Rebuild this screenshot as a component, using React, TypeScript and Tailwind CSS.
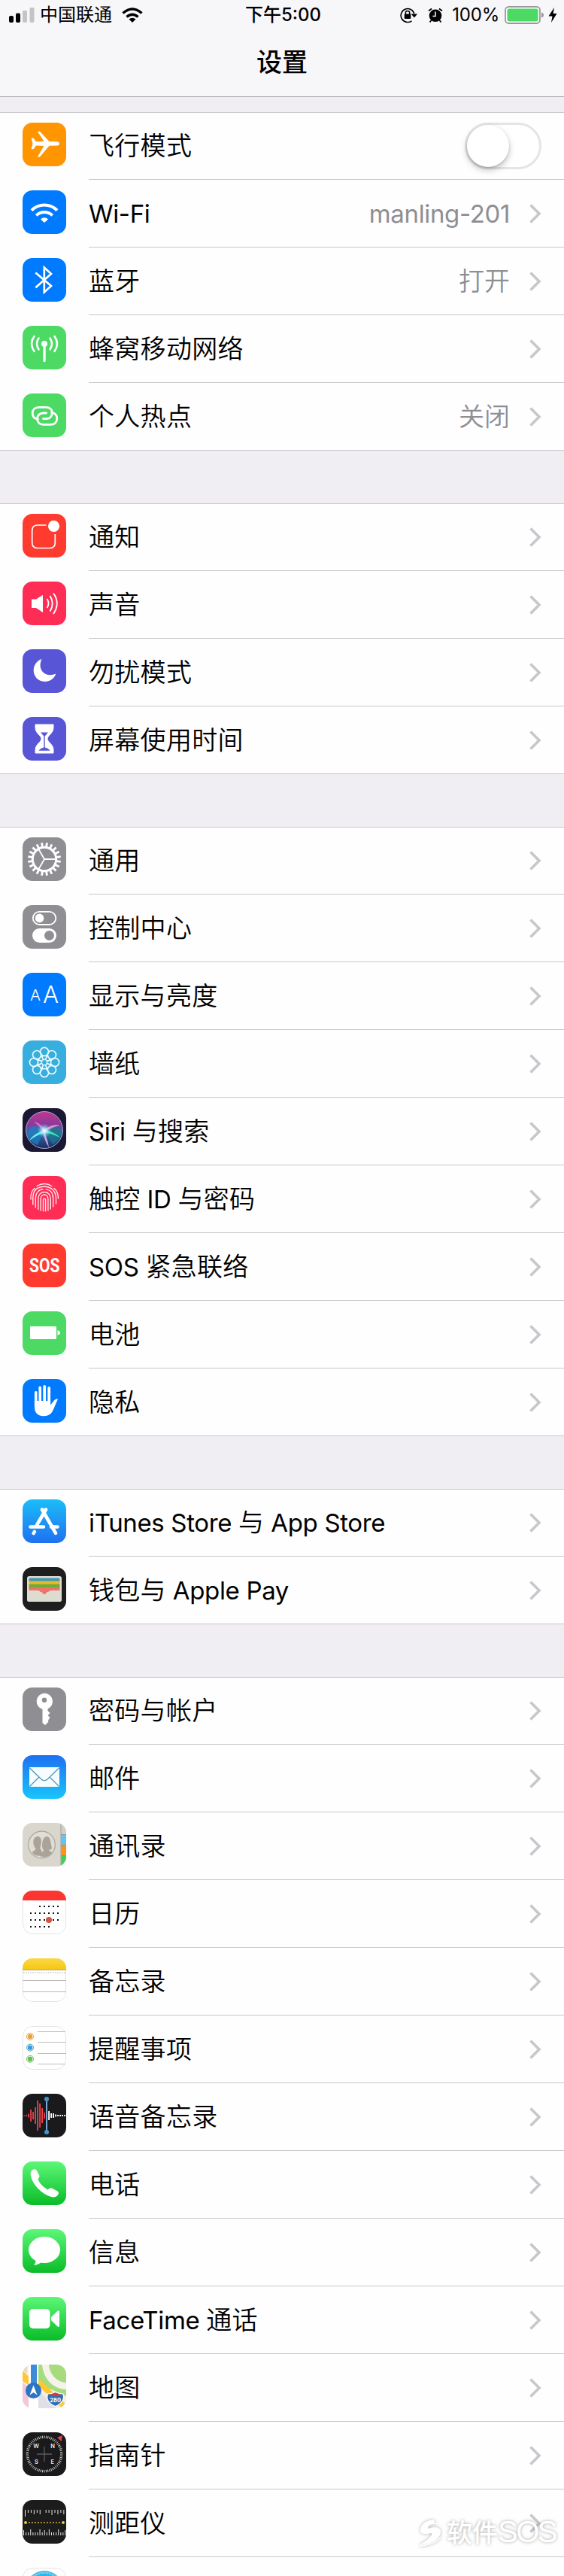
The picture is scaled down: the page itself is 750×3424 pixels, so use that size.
import type { ReactNode } from "react";

type Item = {
  icon: ReactNode;
  label?: string;
  value?: string;
  toggle?: boolean;
};

function Tile({ bg, children }: { bg: string; children?: ReactNode }) {
  return (
    <svg viewBox="0 0 58 58" className="h-[58px] w-[58px] shrink-0 overflow-hidden rounded-[13px]">
      <rect width="58" height="58" fill={bg} />
      {children}
    </svg>
  );
}

function PaperEdge() {
  return <rect x="0.5" y="0.5" width="57" height="57" rx="12.5" fill="none" stroke="#e3e3e5" />;
}

function WifiGlyph() {
  return (
    <>
      <g fill="none" stroke="#fff" strokeWidth="4">
        <path d="M12 26.6A24 24 0 0 1 46 26.6" />
        <path d="M18.3 33.4A15.5 15.5 0 0 1 39.7 33.4" />
      </g>
      <path d="M24 38.4A7 7 0 0 1 34 38.4L29 43Z" fill="#fff" />
    </>
  );
}

const airplane = (
  <Tile bg="#ff9500">
    <path
      d="M11.5 20.5H14.5L18 25.3L28.5 24.8L20 12L22.8 11.5L35.5 25L46 25.3Q49 25.8 49 27.9Q49 30 46 30.4L35.5 30.8L22.8 45.7L20 45.2L28.5 31L18 30.4L14.5 35.2H11.5L13.5 27.9Z"
      fill="#fff"
    />
  </Tile>
);

const wifi = (
  <Tile bg="#007aff">
    <WifiGlyph />
  </Tile>
);

const bluetooth = (
  <Tile bg="#007aff">
    <path d="M17.3 19.5L38 37L28.8 45.5V12.5L38 21L17.3 39.3" fill="none" stroke="#fff" strokeWidth="2.7" />
  </Tile>
);

const cellular = (
  <Tile bg="#4cd964">
    <circle cx="29" cy="24" r="4" fill="#fff" />
    <g fill="none" stroke="#fff" strokeWidth="2.6" strokeLinecap="round">
      <path d="M29 25V46.5" strokeWidth="3.4" />
      <path d="M21.5 16.5Q16.5 24 21.5 31.5" />
      <path d="M36.5 16.5Q41.5 24 36.5 31.5" />
      <path d="M15.5 14Q8.5 24 15.5 34" />
      <path d="M42.5 14Q49.5 24 42.5 34" />
    </g>
  </Tile>
);

const LINK = "M20.5 34.2C15.5 33.5 13.2 30.3 13.2 26.3C13.2 21.3 16.5 18.3 21.5 18.3H31C36 18.3 39.5 21 39.5 25.8C39.5 30.5 36 33.6 31.5 33.6H27.5";

const hotspot = (
  <Tile bg="#4cd964">
    <g fill="none" stroke="#fff" strokeWidth="2.8" strokeLinecap="round">
      <path d={LINK} />
      <path d={LINK} transform="rotate(180 29.5 29.8)" />
    </g>
  </Tile>
);

const notifications = (
  <Tile bg="#ff3b30">
    <path
      d="M31.5 15H20Q12.7 15 12.7 22.3V38.2Q12.7 45.5 20 45.5H36Q43.3 45.5 43.3 38.2V27"
      fill="none"
      stroke="#fff"
      strokeWidth="1.7"
    />
    <circle cx="41.5" cy="16.3" r="7.6" fill="#fff" />
  </Tile>
);

const sound = (
  <Tile bg="#ff2d55">
    <path d="M12 23.5H18L27 17.8V41L18 35H12Z" fill="#fff" />
    <g fill="none" stroke="#fff" strokeWidth="1.9">
      <path d="M32.5 23Q36.5 29 32.5 35" />
      <path d="M36.5 19Q43 29 36.5 39.5" />
      <path d="M41 15.5Q50.5 29 41 43" />
    </g>
  </Tile>
);

const moon = (
  <Tile bg="#5856d6">
    <path d="M25.5 13C11 18 11.5 38 25 42.3C33 44.5 41.5 41 44.3 32.5C30 38.5 19 27 25.5 13Z" fill="#fff" />
  </Tile>
);

const hourglass = (
  <Tile bg="#5856d6">
    <path
      d="M17 10H41V14C41 22 33 24.5 33 29C33 33.5 41 36 41 44V48H17V44C17 36 25 33.5 25 29C25 24.5 17 22 17 14Z"
      fill="#fff"
      stroke="#fff"
      strokeLinejoin="round"
    />
    <path d="M24 20.5H34L29.7 25.5V40.5C33 41.3 35.5 43 36.5 44.8H21.5C22.5 43 25 41.3 28.3 40.5V25.5Z" fill="#5856d6" />
  </Tile>
);

const gear = (
  <Tile bg="#8e8e93">
    <g fill="none" stroke="#fff">
      <circle cx="29" cy="29" r="15.7" strokeWidth="3" />
      {Array.from({ length: 20 }, (_, i) => (
        <path key={i} d="M29 7V12.5" strokeWidth="2.9" transform={`rotate(${i * 18 + 9} 29 29)`} />
      ))}
      <path d="M29 29H44M29 29L21.5 16M29 29L21.5 42" strokeWidth="1.8" />
    </g>
  </Tile>
);

const controlCenter = (
  <Tile bg="#8e8e93">
    <rect x="13.8" y="8.8" width="30.5" height="17.2" rx="8.6" fill="none" stroke="#fff" strokeWidth="1.8" />
    <circle cx="22.5" cy="17.4" r="5.8" fill="#fff" />
    <rect x="13" y="31" width="32" height="19" rx="9.5" fill="#fff" />
    <circle cx="35.5" cy="40.5" r="6.5" fill="#8e8e93" />
  </Tile>
);

const display = (
  <Tile bg="#007aff">
    <g fill="#fff" fontFamily="Inter, sans-serif">
      <text x="10" y="37.3" fontSize="20.5" textLength="14" lengthAdjust="spacingAndGlyphs">A</text>
      <text x="27" y="39.8" fontSize="31" textLength="21" lengthAdjust="spacingAndGlyphs">A</text>
    </g>
  </Tile>
);

const wallpaper = (
  <Tile bg="#37aede">
    <g fill="none" stroke="#e9fbff" strokeWidth="1.7">
      {Array.from({ length: 8 }, (_, i) => (
        <g key={i} transform={`rotate(${i * 45} 29 29)`}>
          <circle cx="29" cy="15" r="5.6" />
          <path d="M24.5 18.5L27.5 25.5M33.5 18.5L30.5 25.5" strokeWidth="1.4" />
        </g>
      ))}
      <circle cx="29" cy="29" r="3.6" strokeWidth="1.4" />
    </g>
  </Tile>
);

const siri = (
  <Tile bg="#1b1833">
    <defs>
      <linearGradient id="siri-base" x1="0" y1="0" x2="0" y2="1">
        <stop offset="0" stopColor="#c2358f" />
        <stop offset="0.35" stopColor="#8a3a9c" />
        <stop offset="0.6" stopColor="#2a6f9e" />
        <stop offset="1" stopColor="#1d2b66" />
      </linearGradient>
      <radialGradient id="siri-glow">
        <stop offset="0" stopColor="#fff" />
        <stop offset="0.35" stopColor="#bff4ff" stopOpacity="0.8" />
        <stop offset="1" stopColor="#55d8e8" stopOpacity="0" />
      </radialGradient>
    </defs>
    <circle cx="29" cy="29" r="24.5" fill="url(#siri-base)" />
    <path d="M29 29C20 20 9 22 6 34C8 42 14 47 20 49Z" fill="#1f7fc4" opacity="0.7" />
    <path d="M29 29C38 22 48 22 52 30C51 38 46 44 40 48Z" fill="#187a8c" opacity="0.7" />
    <path d="M29 30C22 31 13 36 9 43C17 37 24 34 31 32Z" fill="#6ff0e6" />
    <path d="M29 29C37 30 45 34 50 39C43 36 35 33 28 32Z" fill="#45e0b8" />
    <path d="M30 28C36 23 43 21 50 23C43 24 36 27 31 31Z" fill="#e88fc8" />
    <path d="M29 30C31 37 34 45 35 52C31 46 28 38 27 31Z" fill="#d9a3f0" />
    <path d="M29 28C26 23 21 19 15 18C20 22 25 27 28 31Z" fill="#e46ac4" />
    <circle cx="29" cy="30" r="9.5" fill="url(#siri-glow)" />
    <circle cx="29" cy="29" r="24.5" fill="none" stroke="#a9a9cf" strokeWidth="1" />
  </Tile>
);

const touchId = (
  <Tile bg="#ff2d55">
    <g fill="none" stroke="#ffe9ee" strokeWidth="1.4" strokeLinecap="round">
      <path d="M19 13.5Q29 7.5 39 13.5" />
      <path d="M11 31C10.5 24 12.5 19.5 16 16.5" />
      <path d="M42 16.5C46 20 47.5 25 47.5 30" />
      <path d="M13.8 38V29C14 19 20 14.3 29 14.3C38 14.3 44 20 44.5 29V37" />
      <path d="M17.3 42V30C17.3 22.5 22 17.8 27 17.8" />
      <path d="M31 17.9C37 18.5 40.7 23 40.7 30V41" />
      <path d="M20.8 44.5V30.5C20.8 18.5 37.3 18.5 37.3 30.5V44" />
      <path d="M24.2 46V31C24.2 23 33.9 23 33.9 31V46" />
      <path d="M27.5 46.8V31.5Q29 28.3 30.6 31.5V46.8" />
    </g>
  </Tile>
);

const sos = (
  <Tile bg="#ff3b30">
    <text x="9" y="38.3" fill="#fff" fontFamily="Roboto, sans-serif" fontWeight="700" fontSize="26" textLength="40.5" lengthAdjust="spacingAndGlyphs">
      SOS
    </text>
  </Tile>
);

const battery = (
  <Tile bg="#4cd964">
    <rect x="10" y="20" width="35" height="17" rx="1" fill="#fff" />
    <path d="M46.5 25.2Q50 26 50 28.5Q50 31 46.5 31.8Z" fill="#fff" />
  </Tile>
);

const privacy = (
  <Tile bg="#007aff">
    <g stroke="#fff" strokeWidth="3.8" strokeLinecap="round">
      <path d="M17.8 18V36M23.2 11.5V32M29.2 10V32M35.2 12V32" />
    </g>
    <path d="M15.9 29H37.1V34.5L42 28.5Q44 26 47 26.5Q45 31 42.5 37C39.5 45 36 49.3 28 49.3C19.5 49.3 15.9 44 15.9 37Z" fill="#fff" />
    <path d="M20.5 13V29M26.2 12V29M32.2 12V29" stroke="#007aff" strokeWidth="1.5" />
  </Tile>
);

const appStore = (
  <Tile bg="url(#store-bg)">
    <defs>
      <linearGradient id="store-bg" x1="0" y1="0" x2="0" y2="1">
        <stop offset="0" stopColor="#1cbdf9" />
        <stop offset="1" stopColor="#1f70f1" />
      </linearGradient>
    </defs>
    <g stroke="#fff" strokeWidth="4.6" strokeLinecap="round">
      <path d="M31 13.5L19 34M15.8 43L14.7 45M26 13.5L44 44.8" />
      <path d="M10.5 36.5H28M38 36.5H46.5" />
    </g>
  </Tile>
);

const wallet = (
  <Tile bg="#1e1e1e">
    <rect x="6" y="12" width="46" height="34" rx="3" fill="#dedbd0" />
    <rect x="8.5" y="14.5" width="41" height="5" rx="1.5" fill="#4397b3" />
    <rect x="8.5" y="18.5" width="41" height="5" fill="#e9b92d" />
    <rect x="8.5" y="22.7" width="41" height="5" fill="#72aa38" />
    <rect x="8.5" y="27" width="41" height="6" fill="#ee736b" />
    <path d="M6 31H19C22 31 23 32 25 34Q29 38.5 33 34C35 32 36 31 39 31H52V43Q52 46 49 46H9Q6 46 6 43Z" fill="#dedbd0" />
    <path d="M22 30.5H36C33.500 31 33 32.500 31.500 34.500Q29 37.500 26.500 34.500C25 32.500 24.500 31 22 30.5Z" fill="#ee736b" />
  </Tile>
);

const key = (
  <Tile bg="#8e8e93">
    <path
      fillRule="evenodd"
      d="M29 7.5A11 11 0 0 1 33.5 28.5V31L36.5 34L33.5 37L36.5 40L34 43.5L34.5 45.5L30 50L26.5 47V29A11 11 0 0 1 29 7.5ZM29 13.5A3.2 3.2 0 1 0 29 19.9A3.2 3.2 0 1 0 29 13.5Z"
      fill="#fff"
    />
  </Tile>
);

const mail = (
  <Tile bg="url(#mail-bg)">
    <defs>
      <linearGradient id="mail-bg" x1="0" y1="0" x2="0" y2="1">
        <stop offset="0" stopColor="#1e70f2" />
        <stop offset="1" stopColor="#19c5fb" />
      </linearGradient>
    </defs>
    <rect x="9" y="16" width="40" height="26" rx="1" fill="#f6fcff" />
    <path d="M9.5 17L25 32Q29 35.5 33 32L48.5 17M9.5 41.5L21.5 29.5M48.5 41.5L36.5 29.5" fill="none" stroke="#4a94b5" strokeWidth="1.2" />
  </Tile>
);

const contacts = (
  <Tile bg="#d8d6cd">
    <rect x="51.5" width="7" height="15.5" fill="#cfcfc9" />
    <rect x="51.5" y="15.5" width="7" height="14" fill="#66c3ee" />
    <rect x="51.5" y="29.5" width="7" height="14" fill="#f7931e" />
    <rect x="51.5" y="43.5" width="7" height="15" fill="#43ce52" />
    <path d="M51 0V58M51 15.5H58M51 29.5H58M51 43.5H58" stroke="#8b8f86" strokeWidth="0.8" />
    <circle cx="25.5" cy="29" r="17.8" fill="#dfddd5" stroke="#aaa69b" strokeWidth="1.2" />
    <path d="M13 40C13 37 17.5 36.5 17.5 34.5C12.5 28 13.5 18 20 18C26 18 25.5 25 23.5 33C23.5 36 26 36.5 26 40V43C20 45 16 43 13 40Z" fill="#aaa399" />
    <path d="M23 44C23 40 28 38.5 28 36C24.5 33 26 18 32 18C38.5 18 37 29 39.5 34L35 36C36 38 39 38 39 40C35 45 29 47 23 44Z" fill="#aaa399" />
  </Tile>
);

const calendar = (
  <Tile bg="#fff">
    <PaperEdge />
    <rect width="58" height="13" fill="#fb3530" />
    {[[2, 6], [0, 6], [0, 6], [0, 4]].map(([from, to], row) =>
      Array.from({ length: to - from + 1 }, (_, i) => (
        <rect key={`${row}-${i}`} x={10 + (from + i) * 6} y={20 + row * 9} width="2" height="2" fill="#111" />
      )),
    )}
    <circle cx="35" cy="39" r="4" fill="#d9513f" />
  </Tile>
);

const notes = (
  <Tile bg="#fff">
    <defs>
      <linearGradient id="notes-bg" x1="0" y1="0" x2="0" y2="1">
        <stop offset="0" stopColor="#fbd748" />
        <stop offset="1" stopColor="#f7c70d" />
      </linearGradient>
    </defs>
    <PaperEdge />
    <rect width="58" height="15" fill="url(#notes-bg)" />
    <path d="M0 15.5H58" stroke="#b5a978" />
    <path d="M1 19H58" stroke="#c9c9c9" strokeWidth="1.5" strokeDasharray="1.5 1.5" />
    <path d="M0 29.5H58M0 44.5H58" stroke="#b9b9bb" />
  </Tile>
);

const reminders = (
  <Tile bg="#fff">
    <PaperEdge />
    <path d="M20 7.5H58M20 21.5H58M20 36.5H58M20 50.5H58" stroke="#bdbdbf" />
    {[["#e8a33a", 14], ["#3ba0cf", 28.7], ["#69bf52", 43.7]].map(([color, y]) => (
      <g key={color}>
        <circle cx="10" cy={y} r="4.5" fill="none" stroke={color as string} strokeWidth="1" />
        <circle cx="10" cy={y} r="3.2" fill={color as string} />
      </g>
    ))}
  </Tile>
);

const MEMO_BARS = [1, 2, 5, 16, 10, 22, 40, 32, 20, 8];
const MEMO_TAIL = [12, 6, 6, 3, 2, 2, 2, 2];

const voiceMemos = (
  <Tile bg="#1a1a1d">
    {MEMO_BARS.map((h, i) => (
      <rect key={i} x={1.2 + i * 3} y={29 - h / 2} width="1.8" height={h} fill="#e8434a" />
    ))}
    {MEMO_TAIL.map((h, i) => (
      <rect key={i} x={34.2 + i * 3} y={29 - h / 2} width="1.8" height={h} fill="#fff" />
    ))}
    <path d="M32 7V51" stroke="#7aa7cf" strokeWidth="2" />
    <circle cx="32" cy="7" r="3" fill="#3f97cf" />
    <circle cx="32" cy="51" r="3" fill="#3f97cf" />
  </Tile>
);

function GreenFill({ id }: { id: string }) {
  return (
    <defs>
      <linearGradient id={id} x1="0" y1="0" x2="0" y2="1">
        <stop offset="0" stopColor="#5cf777" />
        <stop offset="1" stopColor="#0abc28" />
      </linearGradient>
    </defs>
  );
}

const phone = (
  <Tile bg="url(#phone-bg)">
    <GreenFill id="phone-bg" />
    <path
      d="M12.5 11.5C14.5 9.8 17.5 9.8 18.5 11.5L22.3 18.5C23 20.5 21.5 22 20.5 23.5C22.5 29 27.5 34 33.5 37.5C35 36 37 34.5 39 35.5L46.5 39.5C48.5 40.5 48.3 42.5 47 44.5C45 47.5 41 48 38 47C25 43 13.5 31 11 19.5C10.3 16.5 10.5 13.5 12.5 11.5Z"
      fill="#fff"
    />
  </Tile>
);

const messages = (
  <Tile bg="url(#messages-bg)">
    <GreenFill id="messages-bg" />
    <ellipse cx="29" cy="27.5" rx="21" ry="17.5" fill="#fff" />
    <path d="M17 40C18 43.5 17 46 14.8 47.8C19 47.8 23 46 25 43.5Z" fill="#fff" />
  </Tile>
);

const facetime = (
  <Tile bg="url(#facetime-bg)">
    <GreenFill id="facetime-bg" />
    <rect x="9" y="16" width="27.5" height="26" rx="5" fill="#fff" />
    <path d="M38 27L46.5 18.8Q49 17 49 20V38Q49 41 46.5 39.2L38 31Z" fill="#fff" />
  </Tile>
);

const maps = (
  <Tile bg="#f3efe6">
    <path d="M0 8L8 16V27L0 22Z" fill="#fcc733" />
    <path d="M0 0H6V12L0 7Z" fill="#e6d9c9" />
    <path d="M0 24L8 30V58H0Z" fill="#f3c6da" />
    <path d="M21 0H58V42L21 25Z" fill="#a6dc7d" />
    <path d="M30 -4C31 16 42 28 60 29" fill="none" stroke="#f5f2ea" strokeWidth="9" />
    <path d="M21 23L60 60" stroke="#fcc733" strokeWidth="7.5" />
    <path d="M21 34L45 58H21Z" fill="#dfe0e6" />
    <rect x="8" width="13" height="58" fill="#fff" />
    <rect x="11" width="8" height="35" fill="#3e8bd9" />
    <circle cx="14.5" cy="34.5" r="10.5" fill="#2a75c4" />
    <path d="M14.5 27.5L19.5 40.5L14.5 37L9.5 40.5Z" fill="#fff" />
    <path d="M33.5 39Q39 39 43.5 36.5Q48 39 54 39Q57 50 43.5 55.5Q30 50 33.5 39Z" fill="#2d6fb4" stroke="#fff" strokeWidth="1.2" />
    <path d="M34 41.5Q35 39.8 43.5 37.8Q52 39.8 53.5 41.5Z" fill="#c9403d" />
    <text x="43.7" y="49.5" fill="#fff" fontFamily="Inter, sans-serif" fontWeight="700" fontSize="7.5" textAnchor="middle">280</text>
  </Tile>
);

const compass = (
  <Tile bg="#1a1a1c">
    {Array.from({ length: 60 }, (_, i) => (
      <path key={i} d="M29 4.5V8" stroke="#d8d8d8" strokeWidth="0.9" transform={`rotate(${i * 6} 29 29)`} />
    ))}
    <path d="M53 4L51.5 12L46 7Z" fill="#e2455a" />
    <path d="M29 19V39M19 29H39" stroke="#5b5b5f" strokeWidth="1.3" />
    <g fill="#e8e8e8" fontFamily="Inter, sans-serif" fontWeight="600" fontSize="7.5" textAnchor="middle">
      <text x="18" y="21.3">W</text>
      <text x="40" y="21.3">N</text>
      <text x="18.5" y="42">S</text>
      <text x="39.7" y="42">E</text>
    </g>
  </Tile>
);

const TOP_TICKS = [9, 4, 4, 6, 4, 6, 0, 4, 4, 7, 4, 6, 4, 6];

const measure = (
  <Tile bg="#1c1c1c">
    {TOP_TICKS.map((h, i) => (
      <rect key={i} x={3 + i * 3.95} y="13" width="1" height={h} fill="#e6e6e6" />
    ))}
    {Array.from({ length: 19 }, (_, i) => {
      const h = i % 9 === 0 ? 7 : i % 4 === 3 ? 8 : 4;
      return <rect key={i} x={1 + i * 3.08} y={47 - h} width="1" height={h} fill="#e6e6e6" />;
    })}
    <path d="M8 30H50" stroke="#e8c53f" strokeWidth="1.5" strokeDasharray="1.8 2.2" />
    <circle cx="4" cy="30" r="2" fill="#e8c53f" />
    <circle cx="54" cy="30" r="2" fill="#e8c53f" />
  </Tile>
);

const safari = (
  <Tile bg="#fdfdfd">
    <PaperEdge />
    <circle cx="29" cy="29" r="25" fill="#2fb5e8" />
    <circle cx="29" cy="29" r="22.5" fill="none" stroke="#d8f3fc" strokeWidth="2.5" strokeDasharray="0.7 1.3" />
  </Tile>
);

const GROUPS: Item[][] = [
  [
    { icon: airplane, label: "飞行模式", toggle: true },
    { icon: wifi, label: "Wi-Fi", value: "manling-201" },
    { icon: bluetooth, label: "蓝牙", value: "打开" },
    { icon: cellular, label: "蜂窝移动网络" },
    { icon: hotspot, label: "个人热点", value: "关闭" },
  ],
  [
    { icon: notifications, label: "通知" },
    { icon: sound, label: "声音" },
    { icon: moon, label: "勿扰模式" },
    { icon: hourglass, label: "屏幕使用时间" },
  ],
  [
    { icon: gear, label: "通用" },
    { icon: controlCenter, label: "控制中心" },
    { icon: display, label: "显示与亮度" },
    { icon: wallpaper, label: "墙纸" },
    { icon: siri, label: "Siri 与搜索" },
    { icon: touchId, label: "触控 ID 与密码" },
    { icon: sos, label: "SOS 紧急联络" },
    { icon: battery, label: "电池" },
    { icon: privacy, label: "隐私" },
  ],
  [
    { icon: appStore, label: "iTunes Store 与 App Store" },
    { icon: wallet, label: "钱包与 Apple Pay" },
  ],
  [
    { icon: key, label: "密码与帐户" },
    { icon: mail, label: "邮件" },
    { icon: contacts, label: "通讯录" },
    { icon: calendar, label: "日历" },
    { icon: notes, label: "备忘录" },
    { icon: reminders, label: "提醒事项" },
    { icon: voiceMemos, label: "语音备忘录" },
    { icon: phone, label: "电话" },
    { icon: messages, label: "信息" },
    { icon: facetime, label: "FaceTime 通话" },
    { icon: maps, label: "地图" },
    { icon: compass, label: "指南针" },
    { icon: measure, label: "测距仪" },
    { icon: safari },
  ],
];

// Latin runs are set slightly smaller and tighter than the Chinese ones.
function MixedText({ text }: { text: string }) {
  return text.split(/([\x20-\x7e]+)/).map((run, i) =>
    i % 2 === 1 ? (
      <span key={i} className="text-[33px] font-normal tracking-[-0.35px]">
        {run}
      </span>
    ) : (
      run
    ),
  );
}

function Chevron() {
  return (
    <svg viewBox="0 0 16 26" className="h-[26px] w-4 shrink-0">
      <path d="M1.5 1.5L13 13L1.5 24.5" fill="none" stroke="#c7c7cc" strokeWidth="3.6" />
    </svg>
  );
}

function Toggle() {
  return (
    <div className="h-[62px] w-[102px] shrink-0 rounded-full border-[3px] border-[#e5e4e6] bg-white">
      <div className="h-14 w-14 rounded-full bg-white shadow-[0_4px_8px_rgba(0,0,0,0.25),0_1px_2px_rgba(0,0,0,0.15)]" />
    </div>
  );
}

function Row({ item }: { item: Item }) {
  return (
    <li className="group flex h-[90px] pl-[30px]">
      <div className="pt-[14px]">{item.icon}</div>
      <div className="ml-[30px] flex flex-1 items-center border-b border-[#c8c7cc] pr-[30px] group-last:border-transparent">
        <span className="flex-1 whitespace-nowrap tracking-[0.3px] text-black">
          {item.label && <MixedText text={item.label} />}
        </span>
        {item.value && (
          <span className="mr-[26px] text-[#8e8e93]">
            <MixedText text={item.value} />
          </span>
        )}
        {item.toggle ? <Toggle /> : <Chevron />}
      </div>
    </li>
  );
}

function StatusBar() {
  return (
    <div className="flex h-10 items-center justify-between text-[24px] leading-none text-black">
      <div className="flex flex-1 items-center pl-3">
        <svg viewBox="0 0 34 20" className="h-5 w-[34px]">
          <rect y="11" width="6" height="9" rx="2" />
          <rect x="9" y="7.5" width="6" height="12.5" rx="2" />
          <rect x="18" y="4" width="6" height="16" rx="2" fill="#c4c4c4" />
          <rect x="27.5" width="6" height="20" rx="2" fill="#c4c4c4" />
        </svg>
        <span className="ml-[7px]">中国联通</span>
        <svg viewBox="0 0 28 20" className="ml-[13px] h-5 w-7">
          <g fill="none" stroke="#000" strokeWidth="3.6">
            <path d="M1.5 7.5Q14 -3.5 26.5 7.5" />
            <path d="M6.5 12.5Q14 6 21.5 12.5" />
          </g>
          <path d="M9.5 15.5Q14 11.8 18.5 15.5L14 20Z" />
        </svg>
      </div>
      <div className="font-medium">下午5:00</div>
      <div className="flex flex-1 items-center justify-end pr-[9px]">
        <svg viewBox="0 0 24 22" className="h-[22px] w-6">
          <path d="M15.5 18.8A9 9 0 1 1 18.800 9" fill="none" stroke="#000" strokeWidth="1.6" />
          <path d="M14.500 9.500H23L19 14.500Z" />
          <rect x="5.700" y="9.500" width="8.600" height="6.500" rx="1" />
          <path d="M7.300 10V8Q7.300 5.500 10 5.500Q12.700 5.500 12.700 8V10" fill="none" stroke="#000" strokeWidth="1.5" />
        </svg>
        <svg viewBox="0 0 20 20" className="ml-[13px] h-5 w-5">
          <circle cx="10" cy="10.800" r="8.300" />
          <path d="M1 4.5L5 1.500M19 4.5L15 1.500M4.500 17L2.500 19.500M15.500 17L17.500 19.500" stroke="#000" strokeWidth="1.800" />
          <path d="M10 5.500V11.500H6.500" fill="none" stroke="#fff" strokeWidth="1.500" />
        </svg>
        <span className="ml-3 tracking-[-0.2px]">100%</span>
        <svg viewBox="0 0 52 24" className="ml-[7px] h-6 w-[52px]">
          <rect x="1" y="1" width="46" height="22" rx="4.5" fill="#fff" stroke="#98989b" strokeWidth="1.8" />
          <rect x="3.5" y="3.5" width="41" height="17" rx="2.5" fill="#4cd964" />
          <path d="M49 8.5Q52 9.5 52 12Q52 14.500 49 15.500Z" fill="#98989b" />
        </svg>
        <svg viewBox="0 0 12 20" className="ml-[6px] h-5 w-3">
          <path d="M8 0L0.5 11.5H5.500L4 20L11.500 8H6.500Z" />
        </svg>
      </div>
    </div>
  );
}

function Watermark() {
  return (
    <div className="absolute bottom-[35px] right-[11px] flex items-center gap-[5px] whitespace-nowrap">
      <svg viewBox="0 0 32 40" className="h-10 w-8 overflow-visible drop-shadow-[0_0_2px_rgba(0,0,0,0.3)]">
        <path d="M20 3C8 4 1 11 2 18C3 24 12 22 17 21C19 24 11 30 1 37C17 36 29 29 29 19C29 13 21 12 13 15C10 12 17 8 25 9L21 7Z" fill="#fff" />
        <path d="M1 38C13 37 24 33 29 26" fill="none" stroke="#fff" strokeWidth="1.5" />
      </svg>
      <span className="text-[34px] font-medium leading-[44px] text-white [text-shadow:0_0_4px_rgba(0,0,0,0.35)]">
        软件<span className="font-['Liberation_Sans'] text-[40px] font-normal tracking-[-2.5px]">SOS</span>
      </span>
    </div>
  );
}

export default function App() {
  return (
    <div className="relative h-[3424px] w-[750px] overflow-hidden bg-[#f0eef2] font-['Inter','Noto_Sans_CJK_SC',sans-serif]">
      <header className="h-[129px] border-b border-[#a9a8ac] bg-[#f7f6f9]">
        <StatusBar />
        <h1 className="mt-[18px] text-center text-[34px] font-medium leading-[50px]">设置</h1>
      </header>
      <main className="mt-5 flex flex-col gap-[70px] text-[34px] font-[350] leading-[48px]">
        {GROUPS.map((items) => (
          <ul key={items[0].label} className="bg-[#fefefe] shadow-[inset_0_1px_#c8c7cc,inset_0_-1px_#c8c7cc]">
            {items.map((item, i) => (
              <Row key={i} item={item} />
            ))}
          </ul>
        ))}
      </main>
      <Watermark />
    </div>
  );
}
